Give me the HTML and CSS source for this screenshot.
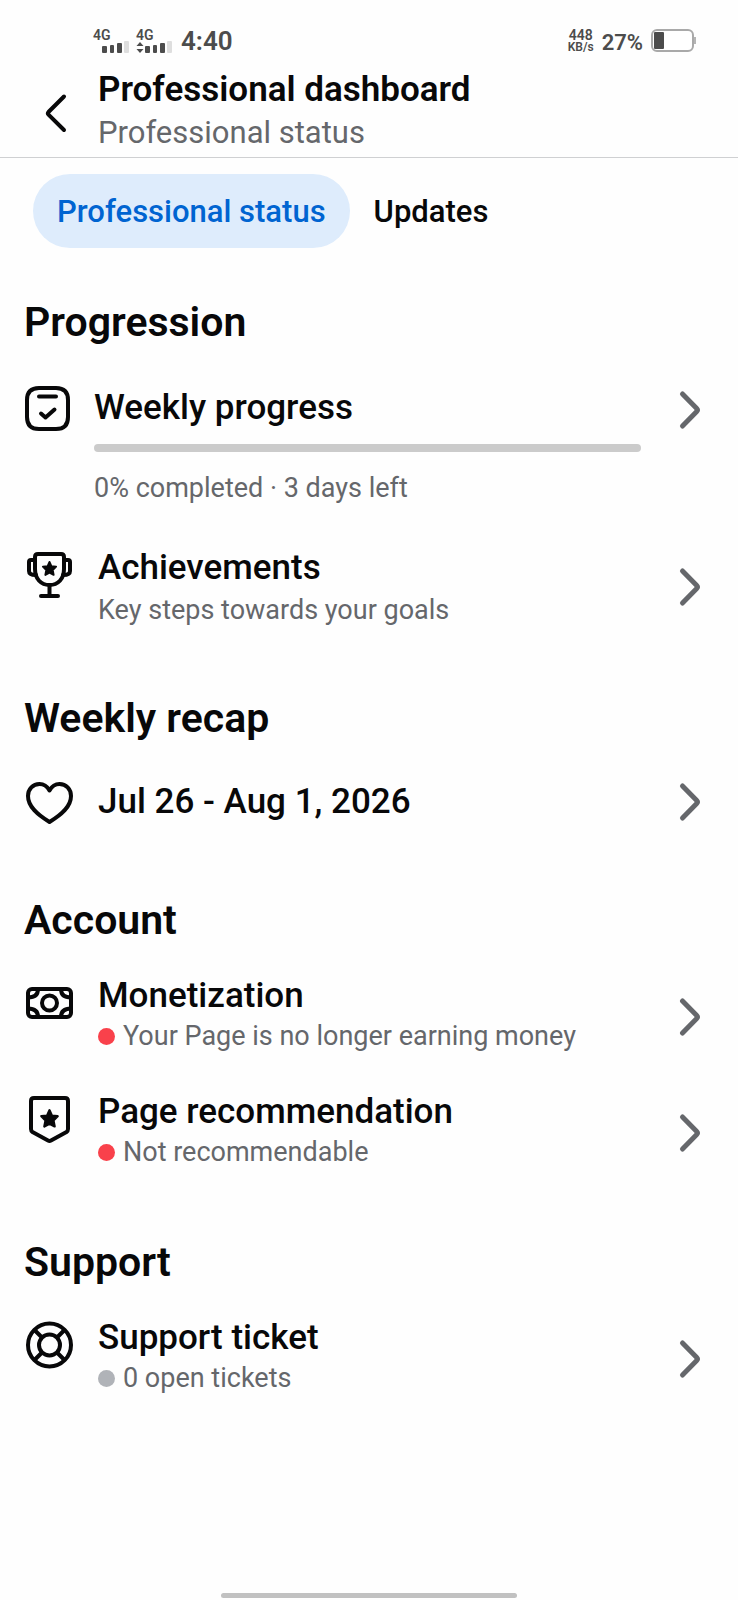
FILE: index.html
```html
<!DOCTYPE html>
<html lang="en">
<head>
    <meta charset="UTF-8">
    <meta name="viewport" content="width=device-width, initial-scale=1.0">
    <title>Professional dashboard</title>
    <link rel="stylesheet" href="styles.css">
</head>
<body>
    <!-- Shared icon shapes -->
    <svg class="defs" aria-hidden="true">
        <symbol id="chevron" viewBox="0 0 48 48">
            <path d="M17.500 8 L31.500 22.200 Q33.300 24 31.500 25.800 L17.500 40" fill="none" stroke="#65676b" stroke-width="5" stroke-linecap="round"/>
        </symbol>
        <symbol id="star" viewBox="0 0 18 18">
            <path d="M9 2 L11 6.500 L16 7 L12.400 10.600 L13.400 15.800 L9 13.400 L4.600 15.800 L5.600 10.600 L2 7 L7 6.500 Z" fill="#080809" stroke="#080809" stroke-width="2" stroke-linejoin="round"/>
        </symbol>
    </svg>

    <div class="status-bar">
        <div class="signal">
            <span>4G</span>
            <svg width="36" height="12" viewBox="0 0 36 12">
                <g fill="#4c4c4c">
                    <rect x="9" y="5" width="5" height="7" rx="1"/>
                    <rect x="17" y="4" width="4" height="8" rx="1"/>
                    <rect x="24" y="2" width="5" height="10" rx="1"/>
                </g>
                <rect x="31" y="0" width="5" height="12" rx="1" fill="#dedede"/>
            </svg>
        </div>
        <div class="signal">
            <span>4G</span>
            <svg width="36" height="12" viewBox="0 0 36 12">
                <g fill="#4c4c4c">
                    <path d="M0.500 5 L4 1 L7.500 5 Z M0.500 8 L4 12 L7.500 8 Z"/>
                    <rect x="9" y="5" width="5" height="7" rx="1"/>
                    <rect x="17" y="4" width="4" height="8" rx="1"/>
                    <rect x="24" y="2" width="5" height="10" rx="1"/>
                </g>
                <rect x="31" y="0" width="5" height="12" rx="1" fill="#dedede"/>
            </svg>
        </div>
        <span class="time">4:40</span>
        <div class="speed">
            <span class="speed-value">448</span>
            <span class="speed-unit">KB/s</span>
        </div>
        <span class="battery-text">27%</span>
        <svg class="battery" width="46" height="24" viewBox="0 0 46 24">
            <rect x="1" y="1" width="41" height="21" rx="5" fill="#fff" stroke="#a9a9a9" stroke-width="2"/>
            <rect x="3" y="3" width="10" height="17" rx="1" fill="#4c4c4c"/>
            <path d="M44 8 V15" stroke="#b5b5b5" stroke-width="2"/>
        </svg>
    </div>

    <header class="header">
        <button class="back" aria-label="Back">
            <svg width="48" height="48" viewBox="0 0 48 48">
                <path d="M32 7.500 L16.500 23 Q15.300 24.300 16.500 25.600 L32 41" fill="none" stroke="#080809" stroke-width="4" stroke-linecap="round"/>
            </svg>
        </button>
        <div class="header-text">
            <h1>Professional dashboard</h1>
            <p class="header-sub">Professional status</p>
        </div>
    </header>

    <nav class="tabs">
        <button class="tab active">Professional status</button>
        <button class="tab">Updates</button>
    </nav>

    <main>
        <section>
            <h2>Progression</h2>
            <a href="#" class="row weekly">
                <svg class="icon" viewBox="0 0 45 45" fill="none" stroke="#080809" stroke-width="4" stroke-linecap="round" stroke-linejoin="round">
                    <path d="M14 2 H31 Q43 2 43 14 V31 Q43 43 31 43 H14 Q2 43 2 31 V14 Q2 2 14 2 Z"/>
                    <path d="M14 10.500 H31 M16 27.500 L20.500 31.500 L29.500 23.500"/>
                </svg>
                <div class="text">
                    <h3>Weekly progress</h3>
                    <div class="progress" role="progressbar" aria-label="Weekly progress" aria-valuenow="0" aria-valuemin="0" aria-valuemax="100"></div>
                    <p>0% completed · 3 days left</p>
                </div>
                <svg class="chevron"><use href="#chevron"/></svg>
            </a>
            <a href="#" class="row spaced">
                <svg class="icon" viewBox="0 0 48 48" fill="none" stroke="#080809" stroke-width="4" stroke-linecap="round" stroke-linejoin="round">
                    <path d="M13 3 H36 Q39 3 39 6 V18 C39 28 33 34 24.500 34 C16 34 10 28 10 18 V6 Q10 3 13 3 Z"/>
                    <path d="M10 9 H6 Q4 9 4 11 V20 Q4 24 11 24 M39 9 H43 Q45 9 45 11 V20 Q45 24 38 24 M24.500 34 V45 M16 45 H33"/>
                    <use href="#star" x="16" y="9" width="17" height="17"/>
                </svg>
                <div class="text">
                    <h3>Achievements</h3>
                    <p>Key steps towards your goals</p>
                </div>
                <svg class="chevron"><use href="#chevron"/></svg>
            </a>
        </section>

        <section class="recap">
            <h2>Weekly recap</h2>
            <a href="#" class="row">
                <svg class="icon" viewBox="0 0 48 48" fill="none" stroke="#080809" stroke-width="4" stroke-linejoin="round">
                    <path d="M24.500 12.500 C22 8 18.500 6 14.500 6 C8 6 3 11 3 18 C3 29 13 37 24.500 44 C36 37 46 29 46 18 C46 11 41 6 34.500 6 C30.500 6 27 8 24.500 12.500 Z"/>
                </svg>
                <div class="text">
                    <h3>Jul 26 - Aug 1, 2026</h3>
                </div>
                <svg class="chevron"><use href="#chevron"/></svg>
            </a>
        </section>

        <section class="compact">
            <h2>Account</h2>
            <a href="#" class="row">
                <svg class="icon" viewBox="0 0 48 48" fill="none" stroke="#080809" stroke-width="4">
                    <rect x="3" y="10" width="43" height="28" rx="4"/>
                    <circle cx="24.500" cy="24" r="7.500"/>
                    <path d="M13 10 C13 16 9 18.500 3 18.500 M36 10 C36 16 40 18.500 46 18.500 M13 38 C13 32 9 29.500 3 29.500 M36 38 C36 32 40 29.500 46 29.500"/>
                </svg>
                <div class="text">
                    <h3>Monetization</h3>
                    <p><span class="dot red"></span>Your Page is no longer earning money</p>
                </div>
                <svg class="chevron"><use href="#chevron"/></svg>
            </a>
            <a href="#" class="row">
                <svg class="icon" viewBox="0 0 48 48" fill="none" stroke="#080809" stroke-width="4" stroke-linejoin="round">
                    <path d="M9 3 H40 Q43 3 43 6 V34 Q43 36 41.500 37 L26 45.500 Q24.500 46.300 23 45.500 L7.500 37 Q6 36 6 34 V6 Q6 3 9 3 Z"/>
                    <use href="#star" x="14" y="13" width="21" height="21"/>
                </svg>
                <div class="text">
                    <h3>Page recommendation</h3>
                    <p><span class="dot red"></span>Not recommendable</p>
                </div>
                <svg class="chevron"><use href="#chevron"/></svg>
            </a>
        </section>

        <section class="compact">
            <h2>Support</h2>
            <a href="#" class="row">
                <svg class="icon" viewBox="0 0 48 48" fill="none" stroke="#080809" stroke-width="4">
                    <circle cx="24.500" cy="24" r="21.500"/>
                    <circle cx="24.500" cy="24" r="10.500"/>
                    <path d="M9.500 9 L17 16.500 M39.500 9 L32 16.500 M9.500 39 L17 31.500 M39.500 39 L32 31.500"/>
                </svg>
                <div class="text">
                    <h3>Support ticket</h3>
                    <p><span class="dot gray"></span>0 open tickets</p>
                </div>
                <svg class="chevron"><use href="#chevron"/></svg>
            </a>
        </section>
    </main>

    <div class="home-indicator"></div>
</body>
</html>
```
FILE: styles.css
```css
* {
    box-sizing: border-box;
}
body {
    font-family: Roboto, Arial, sans-serif;
    background-color: #fefefe;
    color: #080809;
    margin: 0;
    min-height: 100vh;
    display: flex;
    flex-direction: column;
}
h1, h2, h3, p {
    margin: 0;
}
button {
    font-family: inherit;
    color: inherit;
    background: none;
    border: none;
    padding: 0;
    cursor: pointer;
}
.defs {
    display: none;
}

/* Status bar */
.status-bar {
    display: flex;
    align-items: center;
    height: 68px;
    padding: 14px 41px 0 93px;
    color: #4c4c4c;
    font-weight: 600;
}
.signal {
    display: flex;
    flex-direction: column;
    margin-right: 7px;
    font-size: 14px;
    line-height: 12px;
}
.time {
    margin-left: 2px;
    font-size: 26px;
}
.speed {
    display: flex;
    flex-direction: column;
    align-items: center;
    margin-left: auto;
    line-height: 12px;
}
.speed-value {
    font-size: 14px;
}
.speed-unit {
    font-size: 12px;
}
.battery-text {
    margin: 2px 8px 0;
    font-size: 22px;
}

/* Header */
.header {
    display: flex;
    align-items: center;
    height: 90px;
    padding-left: 32px;
    border-bottom: 1px solid #cfd0d2;
}
.back {
    width: 48px;
    height: 48px;
    margin-right: 18px;
}
.header-text {
    padding-bottom: 4px;
}
h1 {
    font-size: 35px;
    line-height: 44px;
    font-weight: 600;
}
.header-sub {
    font-size: 31px;
    line-height: 42px;
    color: #65676b;
}

/* Tabs */
.tabs {
    display: flex;
    padding: 16px 33px 2px;
}
.tab {
    height: 74px;
    padding: 0 24px;
    border-radius: 37px;
    font-size: 31px;
    font-weight: 500;
}
.tab.active {
    background-color: #deecfc;
    color: #0064d1;
}

/* Sections */
section {
    padding-top: 48px;
}
h2 {
    padding: 0 24px;
    margin-bottom: 20px;
    font-size: 41px;
    line-height: 48px;
    font-weight: 600;
}
.row {
    display: flex;
    align-items: center;
    gap: 25px;
    padding: 20px 25px;
    color: inherit;
    text-decoration: none;
}
.icon {
    width: 48px;
    height: 48px;
    margin-top: 3px;
    align-self: flex-start;
}
.text {
    flex: 1;
}
h3 {
    font-size: 35px;
    line-height: 40px;
    font-weight: 500;
}
.text p {
    display: flex;
    align-items: center;
    gap: 8px;
    margin-top: 6px;
    font-size: 27px;
    line-height: 32px;
    color: #65676b;
}
.chevron {
    width: 48px;
    height: 48px;
}
.spaced {
    margin-top: 4px;
}

/* Weekly progress */
.weekly {
    align-items: flex-start;
    gap: 24px;
}
.weekly .text {
    padding-top: 2px;
}
.weekly .icon {
    width: 45px;
    height: 45px;
    margin-top: 0;
}
.progress {
    height: 8px;
    margin: 16px 0 20px;
    border-radius: 4px;
    background-color: #cbcbcb;
}

/* Weekly recap */
.recap h2 {
    margin-bottom: 16px;
}
.recap .icon {
    margin-top: 0;
}

/* Account and support */
.compact {
    padding-top: 50px;
}
.compact h2 {
    margin-bottom: 12px;
}
.compact .text p {
    margin-top: 4px;
}
.compact .chevron {
    margin-top: 5px;
}
.dot {
    width: 17px;
    height: 17px;
    border-radius: 50%;
}
.red {
    background-color: #f9414b;
}
.gray {
    background-color: #b0b3b8;
}

.home-indicator {
    width: 40%;
    height: 5px;
    margin: auto auto 2px;
    border-radius: 3px;
    background-color: #c1c1c1;
}
```
